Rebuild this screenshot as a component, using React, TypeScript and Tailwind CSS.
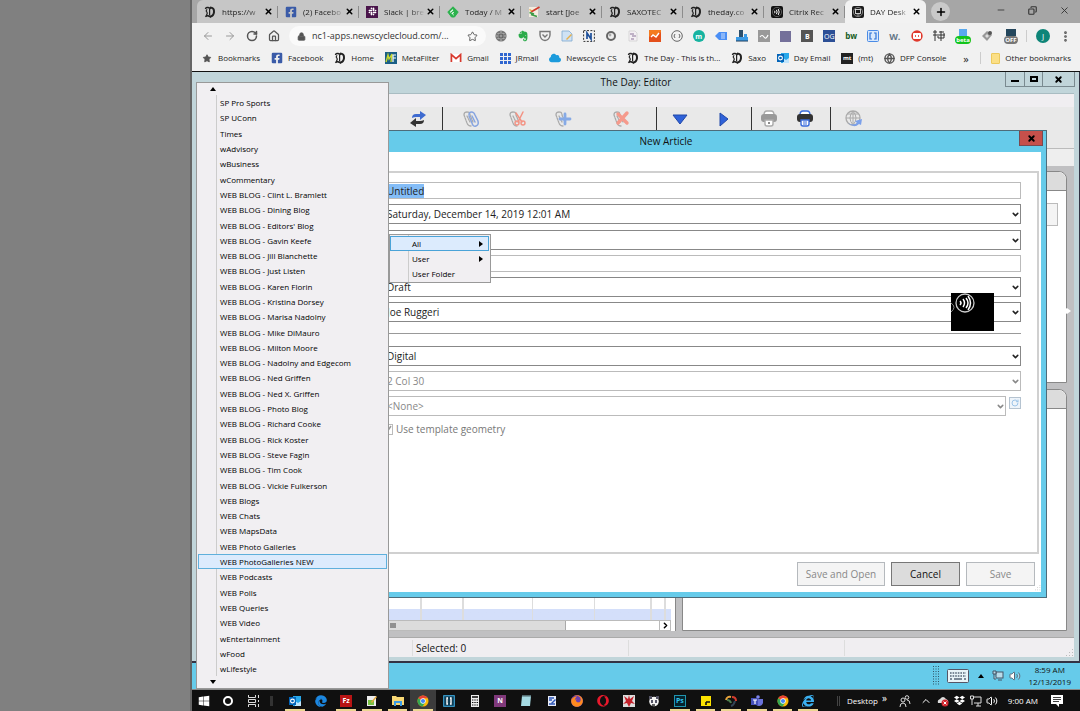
import React from 'react';
import {
  FaCloud,
  FaDropbox,
  FaEdge,
  FaEvernote,
  FaFacebookSquare,
  FaFirefox,
  FaGetPocket,
  FaInternetExplorer,
  FaOpera,
  FaSlack,
  FaWindows,
} from 'react-icons/fa';
import {
  ArrowLeft,
  ArrowRight,
  ChevronDown,
  ChevronUp,
  Copy,
  Globe,
  Home,
  Lock,
  Minus,
  MoreVertical,
  Plus,
  RotateCw,
  Star,
  Volume2,
  X,
} from 'lucide-react';

const FOLDERS = [
  'SP Pro Sports',
  'SP UConn',
  'Times',
  'wAdvisory',
  'wBusiness',
  'wCommentary',
  'WEB BLOG - Clint L. Bramlett',
  'WEB BLOG - Dining Blog',
  "WEB BLOG - Editors' Blog",
  'WEB BLOG - Gavin Keefe',
  'WEB BLOG - Jill Blanchette',
  'WEB BLOG - Just Listen',
  'WEB BLOG - Karen Florin',
  'WEB BLOG - Kristina Dorsey',
  'WEB BLOG - Marisa Nadolny',
  'WEB BLOG - Mike DiMauro',
  'WEB BLOG - Milton Moore',
  'WEB BLOG - Nadolny and Edgecom',
  'WEB BLOG - Ned Griffen',
  'WEB BLOG - Ned X. Griffen',
  'WEB BLOG - Photo Blog',
  'WEB BLOG - Richard Cooke',
  'WEB BLOG - Rick Koster',
  'WEB BLOG - Steve Fagin',
  'WEB BLOG - Tim Cook',
  'WEB BLOG - Vickie Fulkerson',
  'WEB Blogs',
  'WEB Chats',
  'WEB MapsData',
  'WEB Photo Galleries',
  'WEB PhotoGalleries NEW',
  'WEB Podcasts',
  'WEB Polls',
  'WEB Queries',
  'WEB Video',
  'wEntertainment',
  'wFood',
  'wLifestyle',
];

/* ---------- small drawings ---------- */

function DayLogo() {
  return (
    <svg viewBox="0 0 12 12" className="w-3 h-3" fill="none" stroke="#222">
      <path d="M1.5 3Q2 1 4 1.6L7 2.6" strokeWidth="1.6" />
      <path d="M6 1.4Q10.4 1.6 10 6.2Q9.6 10 6 10.8" strokeWidth="2" />
      <path d="M1.4 10.8Q3 9 4.6 10L7 11" strokeWidth="1.5" />
      <path d="M5.6 2.5v7" strokeWidth="1.2" />
      <path d="M3.2 3.4Q1.4 5 3 6.2Q3.8 7.4 2.4 9" strokeWidth="1.2" />
    </svg>
  );
}

function ChromeLogo() {
  return (
    <svg viewBox="0 0 24 24" className="w-3 h-3">
      <circle cx="12" cy="12" r="11" fill="#fbbc05" />
      <path d="M12 12 2.5 6.5A11 11 0 0 1 21.5 6.5L12 6.5Z" fill="#ea4335" />
      <path d="M12 12 2.5 6.5A11 11 0 0 0 11 23L16.8 14.6Z" fill="#34a853" />
      <circle cx="12" cy="12" r="5.4" fill="#fff" />
      <circle cx="12" cy="12" r="4.2" fill="#4285f4" />
    </svg>
  );
}

function CitrixLogo() {
  return (
    <svg viewBox="0 0 12 12" className="w-3 h-3">
      <rect width="12" height="12" rx="2" fill="#111" />
      <circle cx="6" cy="6" r="4.6" fill="none" stroke="#888" strokeWidth=".6" />
      <path d="M3.6 4.8q.8 1.2 0 2.4M5.4 3.8q1.5 2.2 0 4.4M7.2 3q2 3 0 6" fill="none" stroke="#fff" strokeWidth="1" />
    </svg>
  );
}

function DesktopLogo() {
  return (
    <svg viewBox="0 0 12 12" className="w-3 h-3">
      <rect width="12" height="12" rx="2" fill="#1b1b1b" />
      <rect x="3.5" y="3.5" width="5" height="4" fill="none" stroke="#ddd" strokeWidth=".9" />
      <circle cx="6" cy="6" r="4.6" fill="none" stroke="#aaa" strokeWidth=".7" />
      <path d="M4.6 9h3" stroke="#ddd" strokeWidth=".8" />
    </svg>
  );
}

function Feedly() {
  return (
    <svg viewBox="0 0 12 12" className="w-3 h-3">
      <path d="M6 .8 11.2 6 7.5 11h-3L.8 6Z" fill="#2bb24c" stroke="#2bb24c" strokeLinejoin="round" />
      <path d="M3.2 6.4 6 3.6M4.8 8 6.6 6.2M6 9.2l.6-.6" stroke="#fff" strokeWidth="1.1" />
    </svg>
  );
}

function StartLogo() {
  return (
    <svg viewBox="0 0 12 12" className="w-3 h-3" fill="none">
      <rect x="1" y="1" width="9" height="10" fill="#f3ecdf" />
      <path d="M3 6 11.500 1" stroke="#d0392b" strokeWidth="1.8" />
      <path d="M1.500 6.500 6 8M3 8.500l6 2" stroke="#3b9b47" strokeWidth="1.8" />
      <path d="M1.500 3.500 4 5" stroke="#e9a13b" strokeWidth="1.3" />
    </svg>
  );
}

function Outlook() {
  return (
    <svg viewBox="0 0 12 12" className="w-3 h-3">
      <rect x="4" y="1" width="8" height="10" fill="#28a8ea" />
      <path d="M6 6l3 2 3-2v5H6Z" fill="#bfe4fb" />
      <rect y="2" width="7" height="8" fill="#0364b8" />
      <circle cx="3.5" cy="6" r="1.9" fill="none" stroke="#fff" strokeWidth="1.1" />
    </svg>
  );
}

function Facebook() {
  return <FaFacebookSquare className="w-3 h-3 text-[#3a5ba8]" />;
}

function AppsGrid() {
  return (
    <svg viewBox="0 0 11 11" className="w-[11px] h-[11px]" fill="#2f66d0">
      {[0, 4, 8].map((y) => [0, 4, 8].map((x) => <rect key={`${x}-${y}`} x={x} y={y} width="3" height="3" />))}
    </svg>
  );
}

function Gmail() {
  return (
    <svg viewBox="0 0 12 10" className="w-3 h-[10px]">
      <rect x="1" y="1" width="10" height="8" fill="#fff" />
      <path d="M1.4 9V1.6L6 5.6l4.6-4V9" fill="none" stroke="#d8392d" strokeWidth="1.7" />
    </svg>
  );
}

function ClipIcon({ kind }: { kind: 'clip' | 'cut' | 'add' | 'remove' }) {
  return (
    <svg viewBox="0 0 18 18" className="w-[18px] h-[18px]" fill="none" strokeLinecap="round">
      <path d="M2 5q0-3 3-3t3 3l3 7M2 5l3 8q1 3 4 3M5 6l3 6" stroke="#aaa" strokeWidth="1.3" strokeDasharray="2 1" />
      {kind === 'clip' && (
        <path d="M7 5q0-3 2.5-3T13 5l3 6q1 4-2 5t-4-3L7 6M10 6l3 6" stroke="#87a5e0" strokeWidth="1.5" />
      )}
      {kind === 'cut' && (
        <>
          <path d="M8 3l6 9M15 2l-5 10" stroke="#f39384" strokeWidth="1.5" />
          <circle cx="9" cy="13" r="2" stroke="#f39384" strokeWidth="1.4" />
          <circle cx="15" cy="13" r="2" stroke="#f39384" strokeWidth="1.4" />
        </>
      )}
      {kind === 'add' && <path d="M11 4v10M6 9h10" stroke="#86aae6" strokeWidth="2.8" />}
      {kind === 'remove' && <path d="M6 4l9 9M15 3 6 13" stroke="#f59a8c" strokeWidth="3.4" />}
    </svg>
  );
}

function PrinterIcon({ active }: { active?: boolean }) {
  const body = active ? '#333' : '#999';
  const paper = active ? '#3a6bdc' : '#aaa';
  return (
    <svg viewBox="0 0 18 18" className="w-[18px] h-[18px]">
      <path d="M4 5q0-4 3-4h4q3 0 3 4" fill="#fff" stroke={paper} strokeWidth="1.4" />
      <rect x="1" y="4" width="16" height="8" rx="3" fill={body} />
      <path d="M5 10h8v4q0 2-2 2H7q-2 0-2-2Z" fill="#fff" stroke={paper} strokeWidth="1.4" />
      {active ? <path d="M7 12h4M7 14h4" stroke={paper} /> : <circle cx="9" cy="13" r="1" fill="#666" />}
    </svg>
  );
}

function Grip() {
  return (
    <svg viewBox="0 0 8 8" className="ml-auto h-2 w-2 self-end" fill="#bbb">
      <path d="M6 0h1v1H6ZM6 3h1v1H6ZM3 3h1v1H3ZM6 6h1v1H6ZM3 6h1v1H3ZM0 6h1v1H0Z" />
    </svg>
  );
}

/* ---------- browser ---------- */

const TABS = [
  { title: 'https://w', icon: <DayLogo /> },
  { title: '(2) Facebo', icon: <Facebook /> },
  {
    title: 'Slack | bre',
    icon: (
      <span className="flex w-3 h-3 items-center justify-center bg-[#4a154b]">
        <FaSlack className="w-[9px] h-[9px] text-white" />
      </span>
    ),
  },
  { title: 'Today / M', icon: <Feedly /> },
  { title: 'start [Joe', icon: <StartLogo /> },
  { title: 'SAXOTEC', icon: <DayLogo /> },
  { title: 'theday.co', icon: <DayLogo /> },
  { title: 'Citrix Rec', icon: <CitrixLogo /> },
  { title: 'DAY Desk', icon: <DesktopLogo />, active: true },
];

function TabStrip() {
  return (
    <div className="flex h-[23px] items-center bg-[#a6a6a6] pr-2">
      <div className="flex h-full rounded-t-md bg-[#c6c6c6] ml-[5px]">
        {TABS.map((t) => (
          <div
            key={t.title}
            className={`flex w-[81px] items-center pl-[7px] ${t.active ? 'rounded-t-md bg-[#f2f2f2]' : ''}`}
          >
            <span className="shrink-0">{t.icon}</span>
            <span className="ml-[6px] w-[42px] whitespace-nowrap text-[8px] text-[#222] [mask-image:linear-gradient(90deg,#000_60%,transparent)]">
              {t.title}
            </span>
            <button aria-label="Close tab" className="text-black">
              <X className="w-[9px] h-[9px]" strokeWidth={4} />
            </button>
            {!t.active && <span className="ml-auto h-3 w-px bg-[#8c8c8c]" />}
          </div>
        ))}
      </div>
      <button aria-label="New tab" className="ml-[5px] flex h-[19px] w-[19px] items-center justify-center rounded-full bg-[#c9c9c9]">
        <Plus className="w-3 h-3" strokeWidth={3} />
      </button>
      <div className="ml-auto flex items-center gap-[22px] pb-[3px] pr-[2px] text-[#333]">
        <button aria-label="Minimize"><Minus className="w-[10px] h-[10px]" /></button>
        <button aria-label="Restore"><Copy className="w-[9px] h-[9px] -scale-x-100" strokeWidth={3} /></button>
        <button aria-label="Close"><X className="w-[11px] h-[11px]" /></button>
      </div>
    </div>
  );
}

function Extensions() {
  const box = 'flex h-3 w-3 items-center justify-center text-[7px] font-bold leading-none text-white';
  return (
    <div className="flex w-[524px] shrink-0 items-center justify-between">
      <svg viewBox="0 0 12 12" className="h-3 w-3" fill="none">
        <circle cx="6" cy="6" r="5.6" fill="#777" />
        <path d="M1 6h10M6 1v10M2.500 3.500q3.500 1.500 7 0M2.500 8.500q3.500-1.500 7 0" stroke="#ccc" strokeWidth=".7" />
        <circle cx="6" cy="6" r="2" fill="#999" stroke="#444" strokeWidth=".7" />
      </svg>
      <FaEvernote className="h-3 w-3 text-[#2bab4a]" />
      <svg viewBox="0 0 12 12" className="h-3 w-3" fill="none" stroke="#777" strokeWidth="1.4">
        <path d="M1 1.500h10V5q-.5 5-5 5.500Q1.500 10 1 5Z" />
        <path d="M3.500 4.500 6 7l2.500-2.500" />
      </svg>
      <svg viewBox="0 0 12 12" className="h-3 w-3">
        <path d="M1 1h7l3 3v7H1Z" fill="#cfe2f4" stroke="#7fa9d0" strokeWidth=".8" />
        <path d="M5 9 10 4l1 1-5 5Z" fill="#e8b04a" />
      </svg>
      <svg viewBox="0 0 12 12" className="h-3 w-3">
        <rect x=".6" y=".6" width="10.8" height="10.8" fill="none" stroke="#333" strokeDasharray="2 1.4" />
        <path d="M4 9V3l4 6V3" fill="none" stroke="#1d4f9a" strokeWidth="1.7" />
      </svg>
      <svg viewBox="0 0 12 12" className="h-3 w-3">
        <circle cx="6" cy="6" r="4" fill="#eee" stroke="#666" strokeWidth="2" />
        <circle cx="5" cy="5" r="1.4" fill="#aaa" />
      </svg>
      <svg viewBox="0 0 12 12" className="h-3 w-3">
        <path d="M2 1h6l2 2v8H2Z" fill="#f4f0f4" stroke="#ccc" strokeWidth=".7" />
        <path d="M3 4h4M5 6h4M4 9h3" stroke="#8a7599" />
      </svg>
      <svg viewBox="0 0 12 12" className="h-3 w-3">
        <path d="M0 0h12v12H0Z" fill="#f47b20" />
        <path d="M0 12V7l3-3 3 3 5-5 1 1v9Z" fill="#e4501b" />
        <path d="M2 7 4 5l3 2 3-4" stroke="#fff" strokeWidth="1.4" fill="none" />
      </svg>
      <svg viewBox="0 0 12 12" className="h-3 w-3" fill="none" stroke="#666">
        <circle cx="6" cy="6" r="5.3" />
        <path d="M4 4q-2 2 0 4M8 4q2 2 0 4" />
      </svg>
      <span className={`${box} rounded-full bg-[#16b3a0]`}>m</span>
      <svg viewBox="0 0 12 12" className="h-3 w-3">
        <path d="M0 6 4 2h8v8H4Z" fill="#4b8ff5" />
        <path d="M6 4h4M6 6h4M6 8h4" stroke="#d9e6fd" strokeWidth=".9" />
      </svg>
      <svg viewBox="0 0 12 12" className="h-3 w-3">
        <path d="M3 0h4v7H3Z" fill="#2b4f6c" />
        <path d="M0 7h12v4H0ZM8 4h3v3H8Z" fill="#3b9be6" />
        <path d="M0 11h12" stroke="#1c3d5c" />
      </svg>
      <svg viewBox="0 0 12 12" className="h-3 w-3">
        <path d="M0 0h12v12H0Z" fill="#999" />
        <path d="M2 7q2-3 4 0t4-2" stroke="#fff" fill="none" strokeWidth="1.2" />
      </svg>
      <span className="h-[11px] w-[11px] bg-[#74709a]" />
      <span className={`${box} bg-[#555]`}>B</span>
      <span className={`${box} bg-[#2c4f96] font-normal`}>OG</span>
      <span className="w-3 text-[8px] font-bold leading-none text-[#155c22]">bw</span>
      <svg viewBox="0 0 12 12" className="h-3 w-3">
        <rect x=".5" y=".5" width="11" height="11" rx="1" fill="#d8e8fc" stroke="#4a8be6" />
        <path d="M5 3H3v6h2M7 3h2v6H7" stroke="#2c72d8" fill="none" strokeWidth="1.2" />
      </svg>
      <span className="w-3 text-[9px] font-bold leading-none text-[#667788]">W.</span>
      <svg viewBox="0 0 12 12" className="h-3 w-3">
        <circle cx="6" cy="6" r="5.7" fill="#e0392c" />
        <rect x="2" y="3" width="8" height="6" rx="1" fill="#fff" />
        <path d="M5 5 4 6l1 1M7 5l1 1-1 1" stroke="#e0392c" fill="none" strokeWidth=".8" />
      </svg>
      <svg viewBox="0 0 12 12" className="h-3 w-3" stroke="#333">
        <path d="M0 2h4M6 2h5M2 0v11M8 1v10M0 5h4M6 5h6M5 8h6M11 3v5M5 4v4" />
      </svg>
      <span className="flex w-4 flex-col items-center">
        <span className="h-[7px] w-2 bg-[#5aa9ee]" />
        <span className="rounded-sm bg-[#12c41b] px-px text-[6px] font-bold leading-[8px] text-white">beta</span>
      </span>
      <svg viewBox="0 0 12 12" className="h-3 w-3">
        <path d="M1 6 6 1l5 4-5 6Z" fill="#999" />
        <circle cx="9" cy="3" r="2" fill="#555" />
        <path d="M4 6l2-2 2 2-2 2Z" fill="#ddd" />
      </svg>
      <span className="flex w-4 flex-col items-center">
        <span className="h-[7px] w-[10px] bg-[#24465c]" />
        <span className="rounded-sm bg-[#777] px-px text-[6px] font-bold leading-[8px] text-white">OFF</span>
      </span>
    </div>
  );
}

function AddressRow() {
  return (
    <div className="flex h-[26px] items-center bg-[#f1f1f1] pl-[10px] pr-2 text-[#555]">
      <div className="flex items-center gap-[10px]">
        <button aria-label="Back" className="text-[#999]"><ArrowLeft className="h-3 w-3" /></button>
        <button aria-label="Forward" className="text-[#999]"><ArrowRight className="h-3 w-3" /></button>
        <button aria-label="Reload"><RotateCw className="h-3 w-3" strokeWidth={3} /></button>
        <button aria-label="Home page"><Home className="h-3 w-3" strokeWidth={2.5} /></button>
      </div>
      <div className="ml-[9px] mr-[9px] flex h-5 min-w-0 flex-1 items-center rounded-full bg-[#fafafa] px-2">
        <Lock className="h-[9px] w-[9px] shrink-0 fill-[#555]" />
        <input
          aria-label="Address"
          readOnly
          value="nc1-apps.newscyclecloud.com/..."
          className="min-w-0 flex-1 pl-[6px] text-[9px] text-[#333] outline-none"
        />
        <button aria-label="Bookmark this page"><Star className="h-[11px] w-[11px]" /></button>
      </div>
      <Extensions />
      <span className="ml-[7px] h-3 w-px bg-[#ccc]" />
      <span className="ml-[9px] flex h-[14px] w-[14px] items-center justify-center rounded-full bg-[#0e8578] text-[8px] text-white">J</span>
      <button aria-label="Menu" className="ml-[9px]"><MoreVertical className="h-[13px] w-[13px]" strokeWidth={3} /></button>
    </div>
  );
}

const BOOKMARKS = [
  { label: 'Bookmarks', icon: <Star className="h-[9px] w-3 fill-[#555] text-[#555]" /> },
  { label: 'Facebook', icon: <Facebook /> },
  { label: 'Home', icon: <DayLogo /> },
  {
    label: 'MetaFilter',
    icon: (
      <svg viewBox="0 0 12 12" className="h-3 w-3">
        <path d="M0 0h12v12H0Z" fill="#1b5f86" />
        <path d="M1 10 3 3l1 4L7 2 6 10" stroke="#c8d92f" fill="none" strokeWidth="1.4" />
        <path d="M8 10V3h3M8 6h3" stroke="#fff" fill="none" strokeWidth="1.2" />
      </svg>
    ),
  },
  { label: 'Gmail', icon: <Gmail /> },
  { label: 'JRmail', icon: <AppsGrid /> },
  { label: 'Newscycle CS', icon: <FaCloud className="h-3 w-3 text-[#1c9bdc]" /> },
  { label: 'The Day - This is th...', icon: <DayLogo /> },
  { label: 'Saxo', icon: <DayLogo /> },
  { label: 'Day Email', icon: <Outlook /> },
  {
    label: '(mt)',
    icon: <span className="flex h-[11px] w-3 items-center justify-center bg-[#222] text-[6px] font-bold text-white">mt</span>,
  },
  { label: 'DFP Console', icon: <Globe className="h-[11px] w-[11px] text-[#555]" strokeWidth={3} /> },
];

function BookmarkBar() {
  return (
    <nav className="flex h-[22px] items-center justify-between bg-[#f1f1f1] px-[9px] pb-[4px] text-[8px] text-[#222]">
      {BOOKMARKS.map((b) => (
        <a key={b.label} href="#" className="flex items-center gap-[5px] whitespace-nowrap">
          <span>{b.icon}</span>
          {b.label}
        </a>
      ))}
      <button className="pl-[6px] text-[11px] leading-none" aria-label="More bookmarks">»</button>
      <span className="h-3 w-px bg-[#ccc]" />
      <a href="#" className="flex items-center gap-[5px] whitespace-nowrap">
        <span className="h-[11px] w-[9px] rounded-[1px] border border-[#ecc95c] bg-[#fbdf86]" />
        Other bookmarks
      </a>
    </nav>
  );
}

/* ---------- editor window behind the dialog ---------- */

function EditorToolbar() {
  return (
    <div className="flex h-[42px] shrink-0 border-b border-[#bbb] bg-[#e9e9e9]">
      <div className="flex h-6 w-[246px] items-center justify-end border-r border-[#333] pr-4">
        <button aria-label="Swap">
          <svg viewBox="0 0 16 16" className="h-4 w-4">
            <path d="M2 7q0-4 4-4h4V0l6 4-6 5V6H6Q4 6 2 7Z" fill="#3e6bd0" />
            <path d="M14 9q0 4-4 4H6v3l-6-4 6-5v3h4q2 0 4-1Z" fill="#333" />
          </svg>
        </button>
      </div>
      <div className="flex h-6 w-[214px] items-center border-r border-[#333] pl-[19px]">
        <button aria-label="Attach"><ClipIcon kind="clip" /></button>
        <button aria-label="Cut" className="ml-7"><ClipIcon kind="cut" /></button>
        <button aria-label="Add" className="ml-7"><ClipIcon kind="add" /></button>
        <button aria-label="Remove" className="ml-10"><ClipIcon kind="remove" /></button>
      </div>
      <div className="flex h-6 w-[95px] items-center border-r border-[#333] pl-[15px]">
        <button aria-label="Down">
          <svg viewBox="0 0 16 16" className="h-4 w-4"><path d="M1 4h14L8 13Z" fill="#2f62d9" stroke="#2148a8" /></svg>
        </button>
        <button aria-label="Next" className="ml-7">
          <svg viewBox="0 0 16 16" className="h-4 w-4"><path d="M4 2v13L12 8Z" fill="#2f62d9" stroke="#2148a8" /></svg>
        </button>
      </div>
      <div className="flex h-6 w-[79px] items-center gap-[18px] border-r border-[#333] pl-2">
        <button aria-label="Print preview"><PrinterIcon /></button>
        <button aria-label="Print"><PrinterIcon active /></button>
      </div>
      <button aria-label="Publish" className="h-6 pl-[14px]">
        <svg viewBox="0 0 18 18" className="h-[18px] w-[18px]" fill="none">
          <circle cx="8" cy="8" r="7" stroke="#aaa" strokeWidth="1.3" />
          <path d="M1 8h14M8 1v14M3 4h10M8 1q-6 7 0 14M8 1q6 7 0 14" stroke="#aaa" />
          <path d="M3 13q5 3 9 0l-2-2 7-2-1 6-2-1Q9 19 3 13Z" fill="#7ba0ea" />
        </svg>
      </button>
    </div>
  );
}

function EditorWindow() {
  return (
    <section className="flex flex-1 flex-col border-b-2 border-r border-[#334] bg-[#c1d5da] pl-[5px]">
      <header className="flex h-[21px] items-start pr-1">
        <span className="w-[70px]" />
        <h1 className="flex-1 text-center text-[10px] leading-5 text-[#111]">The Day: Editor</h1>
        <div className="flex h-[15px] border border-t-0 border-[#7a8a90] text-black">
          <button aria-label="Minimize window" className="flex w-[19px] items-center justify-center border-r border-[#7a8a90]">
            <span className="mt-[3px] h-[2px] w-2 bg-black" />
          </button>
          <button aria-label="Maximize window" className="flex w-[18px] items-center justify-center border-r border-[#7a8a90]">
            <span className="h-[6px] w-2 border-2 border-black" />
          </button>
          <button aria-label="Close window" className="flex w-[31px] items-center justify-center">
            <X className="h-[9px] w-[9px]" strokeWidth={5} />
          </button>
        </div>
      </header>

      <div className="mr-[5px] mb-[4px] flex flex-1 flex-col bg-[#f0eef1]">
        <div className="h-[14px] border-t border-[#a9bcc2]" />
        <EditorToolbar />
        <div className="h-[17px] bg-[#eee]" />

        {/* panes */}
        <div className="flex flex-1 gap-[6px] bg-[#c0c0c2] pb-[6px] pr-[7px] pt-[5px]">
          <div className="flex flex-1 flex-col justify-end border-r border-[#888] bg-white pr-1">
            <div className="flex h-[22px] bg-linear-to-b from-white from-50% to-[#d4dffa] to-50%">
              <span className="flex-1" />
              <span className="w-[42px] border-l-2 border-[#ddd]" />
              <span className="w-[70px] border-l-2 border-[#ddd]" />
              <span className="w-[62px] border-l border-[#ddd]" />
              <span className="w-[56px] border-l border-[#ddd]" />
              <span className="w-[14px] border-l-2 border-[#ddd]" />
              <span className="w-[7px] border-l-2 border-[#ddd]" />
            </div>
            <div className="flex h-[11px] items-center border border-[#bbb] bg-white">
              <div className="flex h-full w-[368px] items-center justify-end border-r border-[#aaa] bg-[#dcdcdc] pr-[169px]">
                <svg viewBox="0 0 6 5" className="h-[5px] w-[6px]"><path d="M1 0v5M3 0v5M5 0v5" stroke="#444" /></svg>
              </div>
              <button aria-label="Scroll right" className="ml-auto flex h-full w-[11px] items-center justify-center border-l border-[#bbb]">
                <ChevronDown className="h-[9px] w-[9px] -rotate-90" strokeWidth={4} />
              </button>
            </div>
          </div>
          <div className="flex w-[385px] flex-col gap-[6px]">
            <div className="h-[212px] rounded-tr-lg border border-[#888] bg-white">
              <div className="h-[19px] rounded-tr-lg border-b border-[#888] bg-[#dcdcdc]" />
              <div className="mr-2 mt-3 h-[23px] border border-[#bbb] bg-[#f4f4f4]" />
            </div>
            <div className="flex-1 rounded-tr-lg border border-[#888] bg-white">
              <div className="h-[19px] rounded-tr-lg border-b border-[#888] bg-[#dcdcdc]" />
            </div>
          </div>
        </div>

        {/* status bar */}
        <footer className="flex h-5 items-center border-t border-[#aaa] text-[10px] text-[#111]">
          <span className="h-4 w-[216px] border-r border-[#ddd]" />
          <span className="w-[216px] border-r border-[#ddd] pl-[3px] leading-4">Selected: 0</span>
          <span className="h-4 w-[216px] border-r border-[#ddd]" />
          <Grip />
        </footer>
      </div>
    </section>
  );
}

/* ---------- New Article dialog ---------- */

function Combo({ label, value, disabled }: { label: string; value: string; disabled?: boolean }) {
  return (
    <div
      className={`grid h-5 flex-1 items-center border bg-white ${
        disabled ? 'border-[#bbb] text-[#888]' : 'border-[#888] text-[#222]'
      }`}
    >
      <select
        aria-label={label}
        disabled={disabled}
        className="col-start-1 row-start-1 h-full w-full appearance-none pl-[3px] text-[10px] leading-[18px] opacity-100 outline-none"
      >
        <option>{value}</option>
      </select>
      <ChevronDown className="pointer-events-none col-start-1 row-start-1 h-[9px] w-[9px] justify-self-end" strokeWidth={4} />
    </div>
  );
}

function Row({ children }: { children: React.ReactNode }) {
  return <div className="flex h-5">{children}</div>;
}

function NewArticleDialog() {
  return (
    <div
      role="dialog"
      aria-label="New Article"
      className="absolute bottom-[92px] left-1 right-[33px] top-[58px] flex flex-col border border-[#4d6c7a] bg-[#66cbea] pb-[5px] pr-[5px]"
    >
      <div className="flex h-[21px] items-start">
        <h2 className="flex-1 pl-[116px] text-center text-[10px] leading-5 text-[#111]">New Article</h2>
        <button aria-label="Close dialog" className="-mr-[2px] flex h-[15px] w-6 items-center justify-center border border-t-0 border-[#7a4a50] bg-[#c6504b]">
          <X className="h-[9px] w-[9px]" strokeWidth={5} />
        </button>
      </div>
      <form className="flex flex-1 flex-col bg-white pt-[19px]" onSubmit={(e) => e.preventDefault()}>
        <div className="mr-[2px] flex flex-1 flex-col gap-[5px] border-2 border-[#d0d0d0] pl-[184px] pr-[16px] pt-[9px]">
          <div className="flex h-[17px] items-center border border-[#bbb]">
            <input
              aria-label="Name"
              defaultValue="Untitled"
              autoFocus
              onFocus={(e) => e.target.select()}
              className="h-full w-full pl-[3px] text-[10px] leading-[15px] text-[#222] outline-none selection:bg-[#84bdf7] selection:text-[#222]"
            />
          </div>
          <Row><Combo label="Publication date" value="Saturday, December 14, 2019 12:01 AM" /></Row>
          <div className="pt-px"><Row><Combo label="Folder" value="" /></Row></div>
          <input aria-label="Description" className="h-[17px] border border-[#bbb] text-[10px] outline-none" />
          <Row><Combo label="Status" value="Draft" /></Row>
          <Row><Combo label="Author" value="Joe Ruggeri" /></Row>
          <hr className="my-[6px] border-[#999]" />
          <div className="pt-px"><Row><Combo label="Channel" value="Digital" /></Row></div>
          <Row><Combo label="Geometry" value="2 Col 30" disabled /></Row>
          <Row>
            <Combo label="Template" value="<None>" disabled />
            <button aria-label="Refresh templates" disabled className="ml-[3px] mt-px flex h-3 w-3 items-center justify-center self-start border border-[#b5c3d0] bg-[#eef4fa]">
              <RotateCw className="h-2 w-2 text-[#9cc4e8]" strokeWidth={3} />
            </button>
          </Row>
          <label className="flex h-4 items-center gap-[3px] text-[10px] text-[#777]">
            <input type="checkbox" defaultChecked disabled className="sr-only" />
            <span className="flex h-[11px] w-[10px] items-center justify-center border border-[#bbb]">
              <svg viewBox="0 0 8 8" className="h-2 w-2" fill="none" stroke="#999" strokeWidth="1.5"><path d="M1 4l2 3 4-6" /></svg>
            </span>
            Use template geometry
          </label>
        </div>
        <div className="flex h-[38px] items-start justify-end gap-[6px] pt-2 text-[10px]">
          <button disabled className="h-6 w-[88px] border border-[#b5b9bd] bg-[#f4f4f4] text-[#888]">Save and Open</button>
          <button className="h-6 w-[69px] border border-[#777] bg-[#dcdcdc] text-[#111]">Cancel</button>
          <button disabled className="h-6 w-[69px] border border-[#b5b9bd] bg-[#f4f4f4] text-[#888]">Save</button>
          <span className="-ml-[6px] flex h-[30px] w-[6px] items-end"><Grip /></span>
        </div>
      </form>
    </div>
  );
}

/* ---------- menus ---------- */

function FolderMenu() {
  return (
    <div className="absolute bottom-px left-1 top-[10px] flex w-[193px] flex-col border border-[#999] bg-[#f1eff2] px-px">
      <button aria-label="Scroll up" className="flex h-3 items-center pl-[12px]">
        <svg viewBox="0 0 6 4" className="h-1 w-[6px]"><path d="M0 4 3 0l3 4Z" /></svg>
      </button>
      <ul role="menu" className="flex flex-1 flex-col bg-[linear-gradient(90deg,transparent_18px,#ccc_18px,#ccc_19px,transparent_19px)]">
        {FOLDERS.map((name) => (
          <li key={name} className="flex flex-1">
            <button
              role="menuitem"
              className={`w-full border pl-[21px] text-left text-[8px] leading-[13px] text-black ${
                name === 'WEB PhotoGalleries NEW' ? 'border-[#5fb0dc] bg-[#dcebfd]' : 'border-transparent'
              }`}
            >
              {name}
            </button>
          </li>
        ))}
      </ul>
      <button aria-label="Scroll down" className="flex h-3 items-center pl-[12px]">
        <svg viewBox="0 0 6 4" className="h-1 w-[6px]"><path d="M0 0h6L3 4Z" /></svg>
      </button>
    </div>
  );
}

function ScopeMenu() {
  return (
    <ul
      role="menu"
      className="absolute left-[197px] top-[162px] w-[102px] border border-[#999] bg-[#f1eff2] bg-[linear-gradient(90deg,transparent_18px,#ccc_18px,#ccc_19px,transparent_19px)] py-px pr-px text-[8px] text-black"
    >
      {['All', 'User', 'User Folder'].map((name) => (
        <li key={name}>
          <button
            role="menuitem"
            className={`flex h-[15px] w-full items-center justify-between border pl-[21px] pr-[5px] ${
              name === 'All' ? 'border-[#4aa3d8] bg-[#dcebfd]' : 'border-transparent'
            }`}
          >
            {name}
            {name !== 'User Folder' && (
              <svg viewBox="0 0 4 6" className="h-[6px] w-1"><path d="M0 0l4 3-4 3Z" /></svg>
            )}
          </button>
        </li>
      ))}
    </ul>
  );
}

function CitrixBadge() {
  return (
    <div className="absolute right-[86px] top-[221px] h-[38px] w-[43px] bg-black">
      <svg viewBox="0 0 43 38" className="h-full w-full" fill="none" stroke="#fff">
        <circle cx="14" cy="10" r="9" stroke="#ccc" strokeWidth="1.3" />
        <path d="M9 8q2 2 0 4M12 6q3 4 0 8M15 5q4 5 0 10M17 3q5 7 0 14" strokeWidth="1.5" />
        <path d="M0 10q6 4 0 9" stroke="#888" />
      </svg>
    </div>
  );
}

// handle of the collapsed Citrix side toolbar
function SideHandle() {
  return (
    <svg viewBox="0 0 8 8" className="absolute right-[9px] top-[235px] h-2 w-2">
      <path d="M0 4 4 1l4 3-4 3Z" fill="#fff" />
    </svg>
  );
}

/* ---------- taskbars ---------- */

function RemoteTaskbar() {
  return (
    <div className="flex h-[27px] items-center justify-end border-b border-[#888] bg-[#66cbea] pr-[9px] text-[8px] text-[#111]">
      <svg viewBox="0 0 6 20" className="h-5 w-[6px]">
        <path d="M.5 0v20M3 0v20M5.500 0v20" stroke="#356" strokeDasharray="1 1.5" />
      </svg>
      <svg viewBox="0 0 22 14" className="ml-2 h-[14px] w-[22px]">
        <rect x=".5" y=".5" width="21" height="13" rx="1" fill="#e8f4f8" stroke="#556" />
        <path d="M3 4h16M3 7h16" stroke="#567" strokeWidth="1.6" strokeDasharray="1.6 1" />
        <path d="M3 10h2M7 10h8M17 10h2" stroke="#567" strokeWidth="1.5" />
      </svg>
      <svg viewBox="0 0 6 4" className="ml-[9px] h-1 w-[6px]"><path d="M0 4 3 0l3 4Z" /></svg>
      <svg viewBox="0 0 12 12" className="ml-2 h-3 w-3" fill="#b9dcea" stroke="#456">
        <rect x="4" y="2" width="7" height="6" />
        <path d="M6 10h4M1 1h3v3H1ZM2 4v5h2" />
      </svg>
      <Volume2 className="ml-[5px] h-3 w-3 fill-white text-[#567]" />
      <div className="ml-2 text-center leading-[12px]">
        <div>8:59 AM</div>
        <div>12/13/2019</div>
      </div>
    </div>
  );
}

const tile = 'flex h-3 w-3 items-center justify-center text-[7px] font-bold leading-none';

const TASKS: { name: string; open?: boolean; current?: boolean; icon: React.ReactNode }[] = [
  { name: 'Outlook', open: true, icon: <Outlook /> },
  { name: 'Edge', icon: <FaEdge className="h-3 w-3 text-[#1c87e0]" /> },
  { name: 'FileZilla', open: true, icon: <span className={`${tile} bg-[#b81414] text-white`}>Fz</span> },
  {
    name: 'Notepad++',
    open: true,
    icon: (
      <svg viewBox="0 0 12 12" className="h-3 w-3">
        <path d="M1 1h9v10H1Z" fill="#eee" />
        <path d="M2 5h6v5H2Z" fill="#79c143" />
        <path d="M5 7 10 1l1 1-5 6Z" fill="#e5a93b" />
      </svg>
    ),
  },
  {
    name: 'Explorer',
    open: true,
    icon: (
      <svg viewBox="0 0 12 12" className="h-3 w-3">
        <path d="M0 1h4l1 1h7v8H0Z" fill="#f7d774" />
        <path d="M2 6h8v5H8V8H4v3H2Z" fill="#3b9be6" />
      </svg>
    ),
  },
  { name: 'Chrome', open: true, current: true, icon: <ChromeLogo /> },
  {
    name: 'Brackets',
    icon: (
      <svg viewBox="0 0 12 12" className="h-3 w-3">
        <rect x=".7" y=".7" width="10.6" height="10.6" fill="#0f3d55" stroke="#3fb0e6" />
        <path d="M5 3H4v6h1M7 3h1v6H7" stroke="#fff" fill="none" strokeWidth="1.4" />
      </svg>
    ),
  },
  {
    name: 'Calculator',
    icon: (
      <svg viewBox="0 0 12 12" className="h-3 w-3">
        <path d="M2 0h8v12H2Z" fill="#eee" />
        <path d="M3 2h6" stroke="#111" strokeWidth="1.6" />
        <path d="M3 5h6M3 7.500h6M3 10h6" stroke="#111" strokeWidth="1.2" strokeDasharray="1.4 .9" />
      </svg>
    ),
  },
  { name: 'OneNote', icon: <span className={`${tile} bg-[#80397b] text-white`}>N</span> },
  {
    name: 'Notes',
    icon: (
      <svg viewBox="0 0 12 12" className="h-3 w-3">
        <path d="M2 1h9l-1 10H1Z" fill="#a6dbe4" />
        <path d="M2 1h9" stroke="#6a8b92" strokeWidth="1.5" />
      </svg>
    ),
  },
  {
    name: 'Editor',
    icon: (
      <svg viewBox="0 0 12 12" className="h-3 w-3">
        <path d="M2 1h8v10H2Z" fill="#e8ecf8" />
        <path d="M3 3h5M3 5h3M3 9h6" stroke="#2d56b8" strokeWidth="1.4" />
        <path d="M5 8 9 4l1 1-4 4Z" fill="#2d56b8" />
      </svg>
    ),
  },
  {
    name: 'Firefox',
    icon: (
      <span className="flex h-3 w-3 items-center justify-center rounded-full bg-[#6b3fb0]">
        <FaFirefox className="h-3 w-3 text-[#ff8a1e]" />
      </span>
    ),
  },
  { name: 'Opera', icon: <FaOpera className="h-3 w-3 text-[#e8192c]" /> },
  {
    name: 'Irfan',
    icon: (
      <svg viewBox="0 0 12 12" className="h-3 w-3">
        <path d="M0 0h12v12H0Z" fill="#ddd" />
        <path d="M6 0 7 4l4-3-2 5 3 3-4-1-2 4-2-4-4 1 3-3-2-5 4 3Z" fill="#c4202a" />
      </svg>
    ),
  },
  {
    name: 'Panda',
    icon: (
      <svg viewBox="0 0 12 12" className="h-3 w-3">
        <circle cx="6" cy="6.5" r="4.8" fill="#f2f2f2" />
        <path d="M1 1h3v3H1ZM8 1h3v3H8ZM3 5h2v3H3ZM7 5h2v3H7Z" fill="#556" />
        <path d="M4 10h3" stroke="#222" strokeWidth="1.4" />
      </svg>
    ),
  },
  { name: 'Photoshop', open: true, icon: <span className={`${tile} border border-[#1f95b0] bg-[#06242e] text-[6px] text-[#31c5f0]`}>Ps</span> },
  {
    name: 'Sticky notes',
    open: true,
    icon: (
      <svg viewBox="0 0 12 12" className="h-3 w-3">
        <path d="M1 1h10v10H1Z" fill="#fde300" />
        <path d="M6 7h4M6 7v3" stroke="#111" strokeWidth="1.6" />
      </svg>
    ),
  },
  {
    name: 'Paint',
    open: true,
    icon: (
      <svg viewBox="0 0 12 12" className="h-3 w-3" fill="none" strokeWidth="2">
        <path d="M1 5q1-4 5-3" stroke="#e8a33b" />
        <path d="M7 2q4 0 4 4" stroke="#d33b2e" />
        <path d="M2 5q3 0 4 3" stroke="#4c7d4f" />
        <path d="M10 6q-1 4-4 5" stroke="#345" />
      </svg>
    ),
  },
  {
    name: 'Teams',
    open: true,
    icon: (
      <svg viewBox="0 0 12 12" className="h-3 w-3">
        <circle cx="7" cy="2" r="1.8" fill="#7b83eb" />
        <path d="M4 4h8v4q-1 3-4 3-3 0-4-3Z" fill="#6a72d9" />
        <path d="M0 3h7v7H0Z" fill="#4650b8" />
        <path d="M2 5h4M4 5v4" stroke="#fff" strokeWidth="1.2" />
      </svg>
    ),
  },
  { name: 'Chrome app', open: true, icon: <ChromeLogo /> },
  { name: 'Internet Explorer', open: true, icon: <FaInternetExplorer className="h-3 w-3 text-[#3bb0f0]" /> },
];

function WindowsTaskbar() {
  return (
    <div className="flex h-[21px] items-center bg-[#101010] text-[8px] text-white">
      <button aria-label="Start" className="pl-[6px]"><FaWindows className="h-3 w-3" /></button>
      <button aria-label="Search" className="ml-[13px] h-[10px] w-[10px] rounded-full border-2 border-white" />
      <button aria-label="Task view" className="ml-[15px]">
        <svg viewBox="0 0 12 12" className="h-3 w-3" fill="none" stroke="#ddd">
          <path d="M.5 0v2.500h7V0M.5 12V9.500h7V12M.5 4.500h7v3h-7ZM10.500 0v3M10.500 5v2M10.500 9v3" />
        </svg>
      </button>
      <span className="ml-[10px] h-[10px] w-[3px] bg-[#333]" />
      <div className="ml-[9px] flex h-full w-[539px]">
        {TASKS.map((t) => (
          <button
            key={t.name}
            aria-label={t.name}
            className={`flex flex-1 items-center justify-center px-[3px] ${t.current ? 'bg-[#3c3c3c]' : ''}`}
          >
            <span
              className={`flex h-full w-full items-center justify-center border-b-2 pt-[2px] ${
                t.open ? 'border-[#ecd692]' : 'border-transparent'
              }`}
            >
              {t.icon}
            </span>
          </button>
        ))}
      </div>
      <div className="ml-auto flex items-center pr-[17px]">
        <span className="mr-[7px] h-[10px] w-[3px] border-x border-[#444]" />
        <span>Desktop</span>
        <span className="ml-1 pb-[6px] text-[10px] leading-none">»</span>
        <svg viewBox="0 0 12 12" className="ml-3 h-3 w-3" fill="none" stroke="#ddd">
          <circle cx="4" cy="5" r="2" />
          <circle cx="8" cy="2.5" r="1.8" />
          <path d="M1 12q0-4 3-4t3 4M8 5q3 0 3 4" />
        </svg>
        <ChevronUp className="ml-[9px] h-3 w-3" />
        <svg viewBox="0 0 12 12" className="ml-[5px] h-3 w-3">
          <path d="M1 8q-1-3 2-4 3-4 6 0 3 1 2 4Z" fill="#ddd" />
          <circle cx="8" cy="8" r="3.5" fill="#d3262e" />
          <path d="M6.600 6.600l2.800 2.800M9.400 6.600 6.600 9.400" stroke="#fff" />
        </svg>
        <FaDropbox className="ml-[5px] h-[11px] w-[11px]" />
        <svg viewBox="0 0 12 12" className="ml-[5px] h-3 w-3" fill="none" stroke="#ddd">
          <path d="M3 2h8v6H4M6 11h5M8 8v3M.5 1h3v3h-3ZM2 4v6" />
        </svg>
        <Volume2 className="ml-[4px] h-3 w-3" />
        <span className="ml-[10px]">9:00 AM</span>
        <svg viewBox="0 0 12 12" className="ml-[13px] h-3 w-3">
          <path d="M0 0h12v9H8v3L5 9H0Z" fill="#fff" />
          <path d="M2 2.500h8M2 4.500h8M2 6.500h6" stroke="#111" strokeWidth=".8" />
        </svg>
      </div>
    </div>
  );
}

export default function App() {
  return (
    <div className="flex min-h-screen bg-[#808080] font-['Open_Sans','Noto_Sans',sans-serif]">
      <div className="w-[192px] shrink-0 border-r-2 border-[#666]" />
      <main className="flex min-w-0 flex-1 flex-col">
        <TabStrip />
        <AddressRow />
        <BookmarkBar />
        <div className="relative flex flex-1 flex-col border-t border-[#111]">
          <EditorWindow />
          <RemoteTaskbar />
          <SideHandle />
          <NewArticleDialog />
          <CitrixBadge />
          <ScopeMenu />
          <FolderMenu />
        </div>
        <WindowsTaskbar />
      </main>
    </div>
  );
}
